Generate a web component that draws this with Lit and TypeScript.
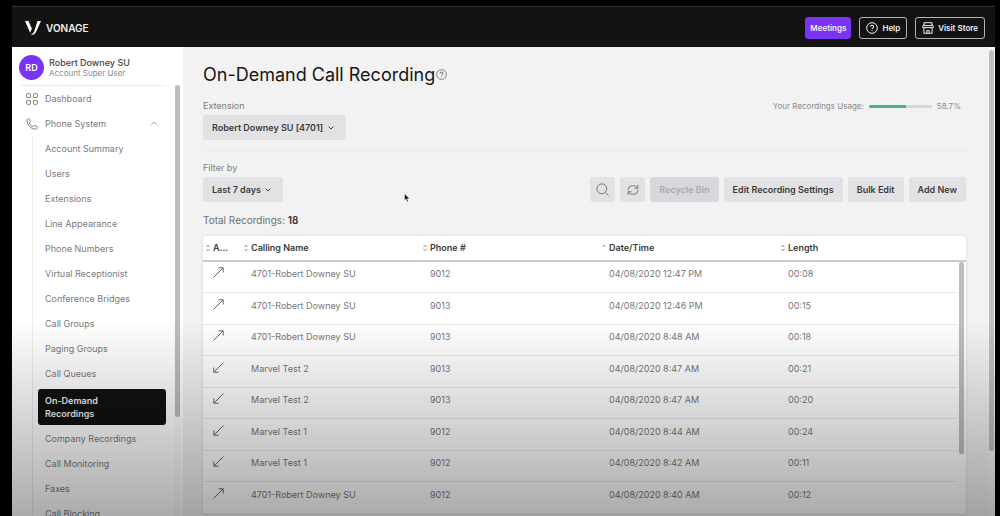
import { LitElement, html, css, svg, nothing } from "lit";
import { customElement, property } from "lit/decorators.js";

interface Recording {
  direction: "out" | "in";
  name: string;
  phone: string;
  date: string;
  length: string;
}

const RECORDINGS: Recording[] = [
  { direction: "out", name: "4701-Robert Downey SU", phone: "9012", date: "04/08/2020 12:47 PM", length: "00:08" },
  { direction: "out", name: "4701-Robert Downey SU", phone: "9013", date: "04/08/2020 12:46 PM", length: "00:15" },
  { direction: "out", name: "4701-Robert Downey SU", phone: "9013", date: "04/08/2020 8:48 AM", length: "00:18" },
  { direction: "in", name: "Marvel Test 2", phone: "9013", date: "04/08/2020 8:47 AM", length: "00:21" },
  { direction: "in", name: "Marvel Test 2", phone: "9013", date: "04/08/2020 8:47 AM", length: "00:20" },
  { direction: "in", name: "Marvel Test 1", phone: "9012", date: "04/08/2020 8:44 AM", length: "00:24" },
  { direction: "in", name: "Marvel Test 1", phone: "9012", date: "04/08/2020 8:42 AM", length: "00:11" },
  { direction: "out", name: "4701-Robert Downey SU", phone: "9012", date: "04/08/2020 8:40 AM", length: "00:12" },
];

const NAV = [
  "Account Summary", "Users", "Extensions", "Line Appearance", "Phone Numbers",
  "Virtual Receptionist", "Conference Bridges", "Call Groups", "Paging Groups",
  "Call Queues", "On-Demand Recordings", "Company Recordings", "Call Monitoring",
  "Faxes", "Call Blocking",
];

const ACTIVE = "On-Demand Recordings";

const shared = css`
  :host, * { box-sizing: border-box; }
  button, select {
    font: inherit;
    color: inherit;
    border: 0;
    margin: 0;
    padding: 0;
    background: none;
    cursor: pointer;
  }
  svg { display: block; fill: none; stroke: currentColor; flex: none; }
  a { color: inherit; text-decoration: none; }
`;

const chevron = html`<svg class="chevron" width="6" height="4" viewBox="0 0 6 4" stroke-width="1" aria-hidden="true"><path d="M.6.6 3 3 5.400.6"/></svg>`;

const helpGlyph = (size: number) => html`
  <svg width=${size} height=${size} viewBox="0 0 12 12" stroke-width="1" aria-hidden="true">
    <circle cx="6" cy="6" r="5.300"/>
    <path d="M4.500 4.800a1.500 1.500 0 1 1 2.300 1.300c-.5.300-.8.500-.8 1.100M6 8.200v.9" stroke-width="1.100"/>
  </svg>`;

@customElement("top-bar")
class TopBar extends LitElement {
  static styles = [shared, css`
    :host {
      display: flex;
      align-items: center;
      justify-content: space-between;
      height: 41px;
      padding: 2px 10px 0 13px;
      background: #131313;
      border-top: 1px solid #323232;
      color: #f0f0f0;
    }
    .brand { display: flex; align-items: center; gap: 5px; font-size: 10px; font-weight: 600; line-height: 14px; }
    .mark { fill: #fff; stroke: none; }
    .actions { display: flex; gap: 8px; }
    .button {
      display: flex;
      align-items: center;
      gap: 4px;
      height: 22px;
      padding: 0 6px;
      border: 1px solid #b4b4b4;
      border-radius: 3px;
      font-size: 8px;
      font-weight: 600;
    }
    .primary { padding: 0 4px; background: #7a32f5; border-color: #7a32f5; }
  `];

  render() {
    return html`
      <a class="brand" href="#">
        <svg class="mark" width="16" height="14" viewBox="0 0 16 14" aria-hidden="true">
          <path d="M0 0h3.500l3.400 7.700-1.800 4z"/>
          <path d="M12.500 0H16l-4.600 10.300C10 13.300 8.700 14 5.800 14c1.900-1.200 2.600-2 3.600-4.300z"/>
        </svg>
        <span>VONAGE</span>
      </a>
      <div class="actions">
        <button class="button primary">Meetings</button>
        <button class="button">${helpGlyph(12)}Help</button>
        <button class="button">
          <svg width="12" height="12" viewBox="0 0 12 12" stroke-width="1" aria-hidden="true">
            <path d="M2 .7h8v2.900H2zM2 2.600.8 4.100v1.500h10.400V4.100L10 2.600M1.900 5.600v5.700h8.200V5.600M4.800 11.300V8.600h2.400v2.700"/>
          </svg>
          Visit Store
        </button>
      </div>`;
  }
}

@customElement("side-nav")
class SideNav extends LitElement {
  static styles = [shared, css`
    :host {
      display: flex;
      flex-direction: column;
      background: #fff;
      color: #7a7a7a;
      font-size: 9px;
      line-height: 13px;
      overflow: hidden;
    }
    .user { display: flex; align-items: center; gap: 5px; height: 38px; padding: 2px 7px 0; }
    .avatar {
      display: grid;
      place-items: center;
      width: 25px;
      height: 25px;
      border-radius: 50%;
      background: #7a32f5;
      color: #fff;
      font-weight: 600;
    }
    .name { display: block; color: #444; font-weight: 500; line-height: 11px; }
    .role { display: block; color: #8a8a8a; font-size: 8px; line-height: 10px; }
    .body { display: flex; flex: 1; min-height: 0; gap: 8px; padding: 0 2px 0 8px; }
    nav { flex: 1; min-width: 0; border-top: 1px solid #ececec; }
    .top { display: flex; align-items: center; gap: 7px; height: 25px; padding: 0 8px 0 6px; }
    .top svg { width: 12px; height: 12px; }
    .top .caret { width: 8px; height: 5px; margin-left: auto; stroke: #aaa; }
    ul { list-style: none; margin: 0 0 0 12px; padding: 0 0 0 5px; border-left: 1px solid #ececec; }
    .link { display: block; padding: 6px 7px; }
    .active {
      margin: 3px 0 1px;
      padding: 5px 60px 5px 7px;
      background: #111;
      border-radius: 3px;
      color: #f2f2f2;
      font-weight: 600;
    }
    .track { width: 7px; padding: 0 1px; background: #fafafa; }
    .thumb { height: 77%; border-radius: 3px; background: #bcbcbc; }
  `];

  render() {
    return html`
      <div class="user">
        <span class="avatar">RD</span>
        <span><span class="name">Robert Downey SU</span><span class="role">Account Super User</span></span>
      </div>
      <div class="body">
        <nav aria-label="Main">
          <a class="top" href="#">
            <svg viewBox="0 0 12 12" stroke-width="1" aria-hidden="true">
              <rect x=".7" y=".7" width="3.800" height="3.800" rx=".6"/><rect x="7.500" y=".7" width="3.800" height="3.800" rx=".6"/>
              <rect x=".7" y="7.500" width="3.800" height="3.800" rx=".6"/><rect x="7.500" y="7.500" width="3.800" height="3.800" rx=".6"/>
            </svg>
            Dashboard
          </a>
          <a class="top" href="#">
            <svg viewBox="0 0 12 12" stroke-width="1" stroke-linejoin="round" aria-hidden="true">
              <path d="M1 2.200C1 1.200 1.800.7 2.700.7c.5 0 .8.300 1 .8l.7 1.800c.1.500 0 .8-.3 1.100l-.7.6c.6 1.500 1.900 2.800 3.500 3.500l.6-.7c.3-.3.7-.4 1.100-.3l1.800.7c.5.200.8.500.8 1 0 .9-.5 1.900-1.600 2C5 11.200 1 7 1 2.200z"/>
            </svg>
            Phone System
            <svg class="caret" viewBox="0 0 8 5" stroke-width="1" aria-hidden="true"><path d="M.7 4.200 4 1l3.300 3.200"/></svg>
          </a>
          <ul>
            ${NAV.map((item) => html`
              <li><a class="link ${item === ACTIVE ? "active" : ""}" href="#" aria-current=${item === ACTIVE ? "page" : nothing}>${item}</a></li>`)}
          </ul>
        </nav>
        <div class="track"><div class="thumb"></div></div>
      </div>`;
  }
}

@customElement("recordings-table")
class RecordingsTable extends LitElement {
  @property({ attribute: false }) rows: Recording[] = [];

  static styles = [shared, css`
    :host {
      display: block;
      position: relative;
      background: #fff;
      border-radius: 4px 4px 0 0;
      box-shadow: 0 0 3px rgba(0, 0, 0, 0.12);
    }
    table { width: 100%; table-layout: fixed; border-collapse: separate; border-spacing: 0; text-align: left; }
    .narrow { width: 38px; }
    .wide { width: 179px; }
    th { height: 26px; padding: 0 0 0 3px; border-bottom: 2px solid #cbcbcb; color: #3c3c3c; font-weight: 600; }
    .sort { display: flex; align-items: center; gap: 3px; white-space: nowrap; }
    .sort svg { stroke: #777; }
    td { height: 31px; padding: 0 0 6px 10px; border-bottom: 1px solid #e9e9ec; color: #777; line-height: 12px; }
    tr:nth-child(even) td { height: 32px; }
    .arrow { margin-bottom: 3px; color: #666; }
    .track { position: absolute; top: 26px; right: 0; bottom: 0; width: 9px; padding: 0 2px; background: #fdfdfd; }
    .thumb { height: 192px; border-radius: 3px; background: #bdbdbd; }
  `];

  private heading(label: string, sorted = false) {
    return html`
      <th scope="col" aria-sort=${sorted ? "ascending" : "none"}>
        <button class="sort">
          <svg width="4" height="8" viewBox="0 0 4 8" stroke-width=".9" aria-hidden="true">
            <path d="M.5 2.700 2 1.500l1.500 1.200"/>${sorted ? nothing : svg`<path d="M.5 5.300 2 6.500l1.500-1.200"/>`}
          </svg>
          ${label}
        </button>
      </th>`;
  }

  render() {
    return html`
      <table>
        <colgroup><col class="narrow"><col class="wide"><col class="wide"><col class="wide"><col></colgroup>
        <thead>
          <tr>
            ${this.heading("A...")}${this.heading("Calling Name")}${this.heading("Phone #")}
            ${this.heading("Date/Time", true)}${this.heading("Length")}
          </tr>
        </thead>
        <tbody>
          ${this.rows.map((row) => html`
            <tr>
              <td>
                <svg class="arrow" width="11" height="11" viewBox="0 0 11 11" stroke-width="1" role="img" aria-label=${row.direction === "out" ? "Outgoing" : "Incoming"}>
                  ${row.direction === "out"
                    ? svg`<path d="M.5 10.500 10 1M5.500.8h4.700v4.700"/>`
                    : svg`<path d="M10.500.5 1 10M.8 5.500v4.700h4.700"/>`}
                </svg>
              </td>
              <td>${row.name}</td>
              <td>${row.phone}</td>
              <td>${row.date}</td>
              <td>${row.length}</td>
            </tr>`)}
        </tbody>
      </table>
      <div class="track"><div class="thumb"></div></div>`;
  }
}

@customElement("app-root")
class AppRoot extends LitElement {
  @property({ type: Number }) usage = 58.7;

  static styles = [shared, css`
    :host {
      display: flex;
      flex-direction: column;
      position: relative;
      height: 100vh;
      padding: 6px 5px 0 12px;
      overflow: hidden;
      background: #000;
      font-family: Inter, "Liberation Sans", sans-serif;
      font-size: 9px;
      line-height: 12px;
    }
    .shell { display: flex; flex: 1; min-height: 0; background: #f2f2f2; }
    side-nav { flex: 0 0 171px; }
    main { flex: 1; min-width: 0; padding: 16px 22px 0 20px; color: #3c3c3c; overflow: hidden; }
    .title { display: flex; align-items: center; gap: 1px; }
    h1 { margin: 0; color: #161616; font-size: 18px; font-weight: 400; line-height: 24px; }
    .hint { padding-bottom: 2px; color: #777; }
    .extension { display: flex; justify-content: space-between; align-items: flex-start; margin-top: 13px; padding-bottom: 10px; border-bottom: 1px solid #e9e9eb; }
    .label { display: block; margin-bottom: 3px; color: #7d7d7d; }
    .picker { display: inline-grid; align-items: center; }
    .picker > * { grid-area: 1 / 1; }
    .picker .chevron { justify-self: end; margin-right: 12px; pointer-events: none; }
    .select { appearance: none; height: 25px; padding: 0 22px 0 9px; border-radius: 3px; background: #e2e2e4; font-weight: 600; }
    .usage { display: flex; align-items: center; gap: 5px; padding-right: 5px; color: #8a8a8a; font-size: 8px; }
    .meter { width: 63px; height: 3px; border-radius: 2px; background: #d6d6d8; overflow: hidden; }
    .fill { height: 100%; background: #4db184; }
    .filters { display: flex; justify-content: space-between; align-items: flex-end; margin-top: 11px; }
    .tools { display: flex; gap: 5px; }
    .tool { display: grid; place-items: center; min-width: 25px; height: 25px; padding: 0 9px; border-radius: 3px; background: #e2e2e5; font-weight: 600; white-space: nowrap; }
    .icon { padding: 0; color: #777; }
    .tool:disabled { background: #d8d8dc; color: #a9a9ae; }
    .total { margin: 12px 0 10px; color: #707070; font-size: 10px; }
    .total b { color: #333; font-weight: 600; }
    .page-track { width: 7px; padding: 3px 1px 0; background: #f6f6f6; }
    .page-thumb { height: 86%; border-radius: 3px; background: #bfbfbf; }
    .shade { position: absolute; inset: 62% 0 0; background: linear-gradient(rgba(0, 0, 0, 0), rgba(0, 0, 0, 0.33)); pointer-events: none; }
    .pointer { position: absolute; left: 404px; top: 193px; fill: #111; stroke: #fff; stroke-width: 0.5; pointer-events: none; }
  `];

  render() {
    return html`
      <top-bar></top-bar>
      <div class="shell">
        <side-nav></side-nav>
        <main>
          <div class="title">
            <h1>On-Demand Call Recording</h1>
            <button class="hint" aria-label="Help">${helpGlyph(11)}</button>
          </div>
          <section class="extension">
            <div>
              <label class="label" for="extension">Extension</label>
              <span class="picker">
                <select class="select" id="extension"><option>Robert Downey SU [4701]</option></select>
                ${chevron}
              </span>
            </div>
            <div class="usage">
              <span>Your Recordings Usage:</span>
              <div class="meter" role="meter" aria-label="Recordings usage" aria-valuenow=${this.usage}>
                <div class="fill" style="width:${this.usage}%"></div>
              </div>
              <span>${this.usage}%</span>
            </div>
          </section>
          <section class="filters">
            <div>
              <label class="label" for="period">Filter by</label>
              <span class="picker">
                <select class="select" id="period"><option>Last 7 days</option></select>
                ${chevron}
              </span>
            </div>
            <div class="tools">
              <button class="tool icon" aria-label="Search">
                <svg width="13" height="13" viewBox="0 0 13 13" stroke-width="1" aria-hidden="true"><circle cx="5.800" cy="5.800" r="4.900"/><path d="m9.300 9.300 3.200 3.200"/></svg>
              </button>
              <button class="tool icon" aria-label="Refresh">
                <svg width="12" height="12" viewBox="0 0 12 12" stroke-width="1" aria-hidden="true"><path d="M1 6.200V5.500a4.300 4.300 0 0 1 4.300-3.800h1.500a4.300 4.300 0 0 1 3.600 2.500M10.900.9v3.400H7.500M11 5.800v.7a4.300 4.300 0 0 1-4.300 3.800H5.200a4.300 4.300 0 0 1-3.600-2.500M1.100 11.100V7.700h3.400"/></svg>
              </button>
              <button class="tool" disabled>Recycle Bin</button>
              <button class="tool">Edit Recording Settings</button>
              <button class="tool">Bulk Edit</button>
              <button class="tool">Add New</button>
            </div>
          </section>
          <p class="total">Total Recordings: <b>18</b></p>
          <recordings-table .rows=${RECORDINGS}></recordings-table>
        </main>
        <div class="page-track"><div class="page-thumb"></div></div>
      </div>
      <div class="shade"></div>
      <svg class="pointer" width="6" height="10" viewBox="0 0 6 10" aria-hidden="true"><path d="M.5.500v7l1.600-1.400L3.200 9l1.200-.5-1.100-2.700h2.200z"/></svg>`;
  }
}
